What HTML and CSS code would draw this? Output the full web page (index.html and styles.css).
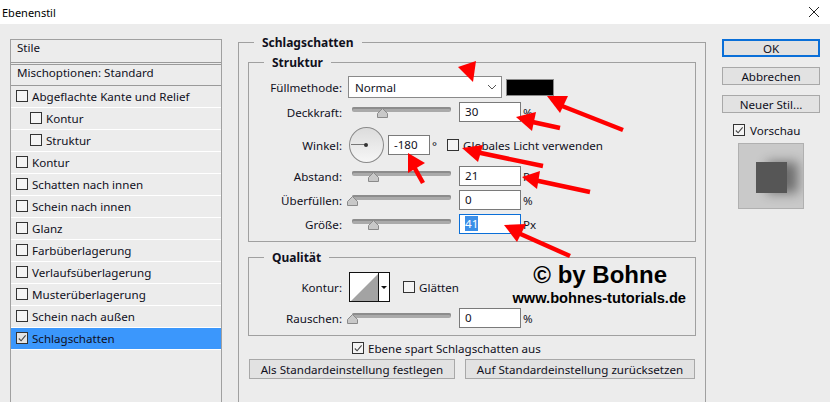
FILE: index.html
```html
<!DOCTYPE html>
<html>
<head>
  <title>Ebenenstil</title>
  <link rel="stylesheet" href="styles.css">
</head>
<body>
  <div class="titlebar">
    <span>Ebenenstil</span>
    <svg class="close-icon" width="12" height="12" viewBox="0 0 12 12"><path d="M1 1L11 11M11 1L1 11" stroke="#222" stroke-width="1" fill="none"/></svg>
  </div>

  <div class="dialog">
    <div class="styles-list">
      <div class="list-head">Stile</div>
      <div class="list-blend">Mischoptionen: Standard</div>
      <div class="list-row"><span class="check"></span>Abgeflachte Kante und Relief</div>
      <div class="list-row sub"><span class="check"></span>Kontur</div>
      <div class="list-row sub"><span class="check"></span>Struktur</div>
      <div class="list-row"><span class="check"></span>Kontur</div>
      <div class="list-row"><span class="check"></span>Schatten nach innen</div>
      <div class="list-row"><span class="check"></span>Schein nach innen</div>
      <div class="list-row"><span class="check"></span>Glanz</div>
      <div class="list-row"><span class="check"></span>Farbüberlagerung</div>
      <div class="list-row"><span class="check"></span>Verlaufsüberlagerung</div>
      <div class="list-row"><span class="check"></span>Musterüberlagerung</div>
      <div class="list-row"><span class="check"></span>Schein nach außen</div>
      <div class="list-row active"><span class="check"><svg width="11" height="11" viewBox="0 0 11 11"><path d="M2 5.5L4.5 8L9.5 2" stroke="#444" stroke-width="1.2" fill="none"/></svg></span>Schlagschatten</div>
    </div>

    <div class="settings">
      <div class="group-title main-title"><b>Schlagschatten</b></div>

      <div class="group structure">
        <div class="group-title"><b>Struktur</b></div>
        <div class="row row-blend">
          <label class="label">Füllmethode:</label>
          <div class="select">Normal
            <svg width="10" height="6" viewBox="0 0 10 6"><path d="M1 1L5 5L9 1" stroke="#555" fill="none"/></svg>
          </div>
          <div class="swatch"></div>
        </div>
        <div class="row row-opacity">
          <label class="label">Deckkraft:</label>
          <div class="slider"><svg class="thumb" style="left: 30%" width="11" height="10" viewBox="0 0 11 10"><path d="M.5 9.5V5.5L5.5 .5L10.5 5.5V9.5Z" fill="#c8c8c8" stroke="#8a8a8a"/></svg></div>
          <div class="input">30</div>
          <span class="unit">%</span>
        </div>
        <div class="row row-angle">
          <label class="label">Winkel:</label>
          <div class="dial"><span class="dial-hand"></span></div>
          <div class="input input-angle">-180</div>
          <span class="degree">°</span>
          <span class="check"></span>
          <span class="check-label">Globales Licht verwenden</span>
        </div>
        <div class="row row-slider">
          <label class="label">Abstand:</label>
          <div class="slider"><svg class="thumb" style="left: 21%" width="11" height="10" viewBox="0 0 11 10"><path d="M.5 9.5V5.5L5.5 .5L10.5 5.5V9.5Z" fill="#c8c8c8" stroke="#8a8a8a"/></svg></div>
          <div class="input">21</div>
          <span class="unit">Px</span>
        </div>
        <div class="row row-slider">
          <label class="label">Überfüllen:</label>
          <div class="slider"><svg class="thumb" style="left: 0" width="11" height="10" viewBox="0 0 11 10"><path d="M.5 9.5V5.5L5.5 .5L10.5 5.5V9.5Z" fill="#c8c8c8" stroke="#8a8a8a"/></svg></div>
          <div class="input">0</div>
          <span class="unit">%</span>
        </div>
        <div class="row row-slider">
          <label class="label">Größe:</label>
          <div class="slider"><svg class="thumb" style="left: 21%" width="11" height="10" viewBox="0 0 11 10"><path d="M.5 9.5V5.5L5.5 .5L10.5 5.5V9.5Z" fill="#c8c8c8" stroke="#8a8a8a"/></svg></div>
          <div class="input focused"><span class="selected">41</span></div>
          <span class="unit">Px</span>
        </div>
      </div>

      <div class="group quality">
        <div class="group-title"><b>Qualität</b></div>
        <div class="row row-contour">
          <label class="label">Kontur:</label>
          <div class="contour">
            <svg width="28" height="28" viewBox="0 0 28 28"><path d="M1 28L28 1V28Z" fill="#a3a3a3"/></svg>
            <span class="contour-drop"></span>
          </div>
          <span class="check"></span>
          <span class="check-label">Glätten</span>
        </div>
        <div class="row row-noise">
          <label class="label">Rauschen:</label>
          <div class="slider"><svg class="thumb" style="left: 0" width="11" height="10" viewBox="0 0 11 10"><path d="M.5 9.5V5.5L5.5 .5L10.5 5.5V9.5Z" fill="#c8c8c8" stroke="#8a8a8a"/></svg></div>
          <div class="input">0</div>
          <span class="unit">%</span>
        </div>
      </div>

      <div class="knockout">
        <span class="check"><svg width="11" height="11" viewBox="0 0 11 11"><path d="M2 5.5L4.5 8L9.5 2" stroke="#444" stroke-width="1.2" fill="none"/></svg></span>
        Ebene spart Schlagschatten aus
      </div>
      <div class="default-buttons">
        <div class="btn btn-left">Als Standardeinstellung festlegen</div>
        <div class="btn btn-right">Auf Standardeinstellung zurücksetzen</div>
      </div>
    </div>

    <div class="actions">
      <div class="btn btn-ok">OK</div>
      <div class="btn">Abbrechen</div>
      <div class="btn">Neuer Stil...</div>
      <div class="preview-check">
        <span class="check"><svg width="11" height="11" viewBox="0 0 11 11"><path d="M2 5.5L4.5 8L9.5 2" stroke="#444" stroke-width="1.2" fill="none"/></svg></span>
        Vorschau
      </div>
      <div class="preview"><div class="preview-box"></div></div>
    </div>
  </div>

  <div class="stamp">
    <div class="stamp-big">© by Bohne</div>
    <div class="stamp-small">www.bohnes-tutorials.de</div>
  </div>

  <svg class="arrows" width="830" height="402" viewBox="0 0 830 402">
    <g fill="#f00">
      <path d="M458 67L476 61L473 82Z"/>
      <path d="M547 96L568 96L560 113Z"/>
      <path d="M516 117L536 112L532 131Z"/>
      <path d="M462 148L483 145L478 162Z"/>
      <path d="M408 153L425 163L408 173Z"/>
      <path d="M522 177L540 171L537 189Z"/>
      <path d="M504 225L526 224L517 242Z"/>
    </g>
    <g stroke="#f00" stroke-width="4.5" fill="none">
      <path d="M557 104L623 130"/>
      <path d="M528 121L560 128"/>
      <path d="M476 152L543 166"/>
      <path d="M413 165L423 183"/>
      <path d="M534 180L590 192"/>
      <path d="M516 232L570 256"/>
    </g>
  </svg>
</body>
</html>
```

FILE: styles.css
```css
* {
  box-sizing: border-box;
}

body {
  margin: 0;
  width: 830px;
  height: 402px;
  overflow: hidden;
  position: relative;
  background-color: #ececec;
  font-family: "Noto Sans", Tahoma, sans-serif;
  font-size: 11.6px;
  color: #10101c;
}

.titlebar {
  height: 24px;
  padding: 0 10px 0 2px;
  background-color: #fff;
  display: flex;
  align-items: center;
  justify-content: space-between;
  color: #000;
  font-size: 11px;
}

.dialog {
  display: flex;
  padding: 15px 11px 0 10px;
}

/* left list */
.styles-list {
  width: 212px;
  height: 380px;
  flex: none;
  border: 1px solid #a0a0a0;
}

.list-head {
  height: 23px;
  padding: 0 0 3px 6px;
  line-height: 15px;
  border-bottom: 1px solid #9a9a9a;
  margin-bottom: 1px;
}

.list-blend {
  height: 22px;
  padding-left: 6px;
  line-height: 15px;
  border-top: 1px solid #9a9a9a;
  border-bottom: 1px solid #9a9a9a;
}

.list-row {
  height: 22px;
  padding: 0 0 1px 5px;
  display: flex;
  align-items: center;
  gap: 4px;
  border-bottom: 1px solid #fff;
}

.list-row.sub {
  padding-left: 19px;
}

.list-row.active {
  background-color: #3b97fc;
}

.check {
  width: 12px;
  height: 12px;
  flex: none;
  border: 1px solid #333;
  background-color: #f4f4f4;
  display: inline-flex;
  align-items: center;
  justify-content: center;
}

.list-row.active .check {
  background-color: #e4e4e4;
}

/* middle column */
.settings {
  width: 468px;
  margin-left: 16px;
  margin-top: 3px;
  padding: 0 9px;
  height: 365px;
  border-left: 1px solid #a0a0a0;
  border-right: 1px solid #a0a0a0;
  position: relative;
}

.group-title {
  display: flex;
  align-items: center;
  gap: 8px;
  font-size: 12px;
}

.group-title::before {
  content: "";
  width: 16px;
  height: 1px;
  background-color: #a0a0a0;
}

.group-title::after {
  content: "";
  flex: 1;
  height: 1px;
  background-color: #a0a0a0;
}

.main-title {
  height: 1px;
  margin: 0 -9px 19px;
}

.main-title::before {
  width: 15px;
}

.group {
  border: 1px solid #a0a0a0;
  border-top: none;
  width: 448px;
}

.group .group-title {
  height: 1px;
  margin: 0 -1px;
}

.structure {
  height: 180px;
  margin-bottom: 15px;
}

.quality {
  height: 79px;
}

.row {
  display: flex;
  align-items: center;
}

.label {
  width: 94px;
  padding-right: 1px;
  flex: none;
  text-align: right;
}

.row-blend {
  height: 22px;
  margin-top: 13px;
}

.select {
  width: 154px;
  height: 22px;
  margin-left: 5px;
  padding: 0 4px 0 6px;
  background-color: #fff;
  border: 1px solid #8a8a8a;
  display: flex;
  align-items: center;
  justify-content: space-between;
}

.swatch {
  width: 48px;
  height: 17px;
  margin-left: 4px;
  background-color: #000;
  border: 1px solid #8a8a8a;
}

.slider {
  width: 99px;
  height: 5px;
  margin: 0 8px 5px 9px;
  background-color: #aaa;
  border-radius: 2px;
  box-shadow: inset 0 2px 0 #8c8c8c;
  position: relative;
}

.thumb {
  position: absolute;
  top: 1px;
  margin-left: -5px;
}

.input {
  width: 62px;
  height: 20px;
  padding: 0 5px;
  flex: none;
  background-color: #fff;
  border: 1px solid #7a7a7a;
  line-height: 18px;
}

.input-angle {
  width: 42px;
  margin-left: 4px;
}

.input.focused {
  border-color: #0a6fd8;
}

.selected {
  background-color: #3b8fe8;
  color: #fff;
}

.unit {
  margin-left: 2px;
}

.row-opacity {
  height: 20px;
  margin-top: 4px;
}

.row-angle {
  height: 36px;
  margin-top: 5px;
}

.dial {
  width: 35px;
  height: 36px;
  margin-left: 6px;
  flex: none;
  border: 1px solid #8a8a8a;
  border-radius: 50%;
  background: linear-gradient(#dcdcdc, #f6f6f6);
  position: relative;
}

.dial-hand {
  position: absolute;
  left: 1px;
  top: 16px;
  width: 15px;
  height: 1px;
  background-color: #777;
}

.dial-hand::after {
  content: "";
  position: absolute;
  right: -2px;
  top: -1px;
  width: 4px;
  height: 4px;
  border-radius: 50%;
  background-color: #333;
}

.degree {
  margin: 0 10px 0 2px;
}

.check-label {
  margin-left: 4px;
}

.row-slider {
  height: 20px;
  margin-top: 4px;
}

.row-angle + .row-slider {
  margin-top: 3px;
}

.row-contour {
  height: 30px;
  margin-top: 14px;
}

.contour {
  width: 41px;
  height: 30px;
  margin-left: 6px;
  flex: none;
  display: flex;
  background-color: #fff;
  border: 1px solid #111;
}

.contour-drop {
  width: 11px;
  border-left: 1px solid #111;
  display: flex;
  align-items: center;
  justify-content: center;
}

.contour-drop::after {
  content: "";
  border: 3px solid transparent;
  border-top: 3px solid #111;
  margin-top: 3px;
}

.row-contour .check {
  margin-left: 13px;
}

.row-noise {
  height: 20px;
  margin-top: 6px;
}

.knockout {
  margin: 5px 0 0 104px;
  height: 14px;
  display: flex;
  align-items: center;
  gap: 4px;
}

/* buttons */
.btn {
  height: 18px;
  border: 1px solid #a8a8a8;
  background-color: #e2e2e2;
  display: flex;
  align-items: center;
  justify-content: center;
}

.default-buttons {
  display: flex;
  gap: 10px;
  margin-top: 4px;
}

.default-buttons .btn {
  height: 20px;
}

.btn-left {
  width: 206px;
  margin-left: 1px;
}

.btn-right {
  width: 230px;
}

/* right column */
.actions {
  width: 98px;
  margin-left: 16px;
  display: flex;
  flex-direction: column;
  flex: none;
}

.actions .btn + .btn {
  margin-top: 10px;
}

.btn-ok {
  border: 2px solid #0a6fd8;
}

.preview-check {
  margin: 10px 0 0 11px;
  height: 14px;
  display: flex;
  align-items: center;
  gap: 5px;
}

.preview {
  width: 66px;
  height: 66px;
  margin: 6px 0 0 16px;
  background-color: #c9c9c9;
  border: 1px solid #b0b0b0;
  display: flex;
  align-items: center;
  justify-content: center;
  overflow: hidden;
}

.preview-box {
  width: 31px;
  height: 31px;
  margin-top: 2px;
  background-color: #565656;
  box-shadow: 11px 0 12px rgba(0, 0, 0, 0.45);
}

/* overlays on top of the dialog */
.stamp {
  position: absolute;
  left: 511px;
  top: 260px;
  width: 175px;
  color: #000;
  font-family: "Liberation Sans", Arial, sans-serif;
  font-weight: bold;
  text-align: right;
}

.stamp-big {
  font-size: 24px;
  line-height: 30px;
  padding-right: 19px;
}

.stamp-small {
  font-size: 14.65px;
  line-height: 17px;
  white-space: nowrap;
}

.arrows {
  position: absolute;
  left: 0;
  top: 0;
}
```
